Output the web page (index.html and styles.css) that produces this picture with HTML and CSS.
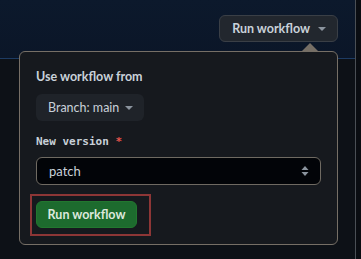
FILE: index.html
```html
<!DOCTYPE html>
<html lang="en">
<head>
    <meta charset="UTF-8">
    <title>Run workflow</title>
    <link rel="stylesheet" href="styles.css">
</head>
<body>

<div class="page">
    <div class="header">
        <button class="btn">Run workflow <span class="caret"></span></button>
    </div>

    <div class="popover">
        <div class="title">Use workflow from</div>
        <button class="branch">Branch: main <span class="caret"></span></button>

        <div class="label">New version <span class="req">*</span></div>
        <div class="select">
            <span>patch</span>
            <svg width="8" height="12" viewBox="0 0 8 12">
                <path d="M4 1 L7.5 5 H0.5 Z M4 11 L7.5 7 H0.5 Z" fill="#8b949e"/>
            </svg>
        </div>

        <div class="mark">
            <button class="btn-green">Run workflow</button>
        </div>
    </div>
</div>

</body>
</html>
```

FILE: styles.css
```css
body {
    margin: 0;
    background: #0a0d12;
    font-family: Lato, "Noto Sans", Arial, sans-serif;
}
.page {
    position: relative;
    width: 355px;
    height: 259px;
    border-right: 1px solid #4a4f55;
    background: #0d1117;
}
.header {
    height: 59px;
    border-bottom: 1px solid #1d3b63;
    background: linear-gradient(#0c192c, #0b1628);
    display: flex;
    justify-content: flex-end;
    align-items: flex-start;
    padding: 15px 17px 0 0;
    box-sizing: border-box;
}
.btn {
    height: 27px;
    padding: 0 11px 0 12px;
    background: #22272e;
    border: 1px solid #3a3f46;
    border-radius: 6px;
    color: #c9d1d9;
    font-family: inherit;
    font-size: 12.5px;
    font-weight: bold;
    white-space: nowrap;
    display: flex;
    align-items: center;
    gap: 8px;
}
.caret {
    display: inline-block;
    width: 0;
    height: 0;
    border-left: 4px solid transparent;
    border-right: 4px solid transparent;
    border-top: 4px solid #8b949e;
}
.popover {
    position: absolute;
    left: 19px;
    top: 51px;
    width: 285px;
    padding: 16px 16px 8px 16px;
    background: #16191e;
    border: 1px solid #766f66;
    border-radius: 6px;
}
.popover::before {
    content: "";
    position: absolute;
    right: 19px;
    top: -9px;
    border-left: 8px solid transparent;
    border-right: 8px solid transparent;
    border-bottom: 8px solid #766f66;
}
.title {
    color: #c9d1d9;
    font-size: 12.5px;
    font-weight: bold;
    line-height: 18px;
}
.branch {
    margin-top: 8px;
    height: 27px;
    padding: 0 11px 0 12px;
    background: #1f2329;
    border: none;
    border-radius: 6px;
    color: #c9d1d9;
    font-family: inherit;
    font-size: 12.5px;
    white-space: nowrap;
    display: flex;
    align-items: center;
    gap: 6px;
}
.label {
    margin-top: 13px;
    line-height: 16px;
    color: #c9d1d9;
    font-family: "DejaVu Sans Mono", monospace;
    font-size: 11px;
    font-weight: bold;
}
.req {
    color: #e5534b;
}
.select {
    margin-top: 7px;
    height: 26px;
    padding: 0 11px 0 12px;
    background: #020408;
    border: 1px solid #6f6a62;
    border-radius: 6px;
    color: #c9d1d9;
    font-size: 13px;
    display: flex;
    align-items: center;
    justify-content: space-between;
}
.mark {
    display: inline-block;
    margin: 9px 0 0 -6px;
    padding: 5px 12px 6px 4px;
    border: 2px solid #8d3636;
}
.btn-green {
    display: block;
    height: 27px;
    width: 101px;
    padding: 0;
    background: #1d6b2e;
    border: 1px solid #22772f;
    border-radius: 6px;
    color: #dce8dc;
    font-family: inherit;
    font-size: 12.5px;
    font-weight: bold;
    white-space: nowrap;
}
```
